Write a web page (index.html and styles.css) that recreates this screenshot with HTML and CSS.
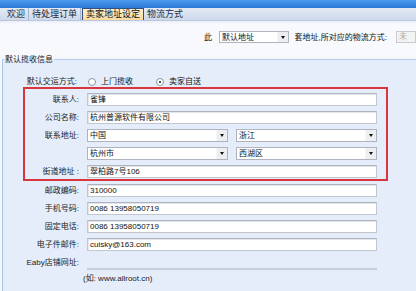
FILE: index.html
```html
<!DOCTYPE html>
<html lang="zh">
<head>
<meta charset="utf-8">
<title>卖家地址设定</title>
<link rel="stylesheet" href="styles.css">
</head>
<body>
<div class="topbar"></div>
<div class="tabs">
  <span class="tab">欢迎</span>
  <span class="tab">待处理订单</span>
  <span class="tab active">卖家地址设定</span>
  <span class="tab last">物流方式</span>
</div>
<div class="toolbar">
  <span>此</span>
  <div class="select sel-top"><span class="val">默认地址</span><span class="arrow"></span></div>
  <span class="tb-text">套地址,所对应的物流方式:</span>
  <div class="ghost">未</div>
</div>
<fieldset class="group">
  <legend>默认揽收信息</legend>
  <div class="row radio-row">
    <span class="label">默认交运方式:</span>
    <span class="radio"></span><span class="rtext">上门揽收</span>
    <span class="radio checked"></span><span class="rtext">卖家自送</span>
  </div>
  <div class="redbox">
    <div class="row"><span class="label">联系人:</span><div class="input">雀锋</div></div>
    <div class="row"><span class="label">公司名称:</span><div class="input">杭州普源软件有限公司</div></div>
    <div class="row"><span class="label">联系地址:</span>
      <div class="pair">
        <div class="select"><span class="val">中国</span><span class="arrow"></span></div>
        <div class="select"><span class="val">浙江</span><span class="arrow"></span></div>
      </div>
    </div>
    <div class="row"><span class="label"></span>
      <div class="pair">
        <div class="select"><span class="val">杭州市</span><span class="arrow"></span></div>
        <div class="select"><span class="val">西湖区</span><span class="arrow"></span></div>
      </div>
    </div>
    <div class="row"><span class="label">街道地址 :</span><div class="input">翠柏路7号106</div></div>
  </div>
  <div class="rest">
    <div class="row"><span class="label">邮政编码:</span><div class="input">310000</div></div>
    <div class="row"><span class="label">手机号码:</span><div class="input">0086 13958050719</div></div>
    <div class="row"><span class="label">固定电话:</span><div class="input">0086 13958050719</div></div>
    <div class="row"><span class="label">电子件邮件:</span><div class="input">cuisky@163.com</div></div>
    <div class="row"><span class="label">Eaby店铺网址:</span><div class="input line"></div></div>
    <div class="note">(如: www.allroot.cn)</div>
  </div>
</fieldset>
</body>
</html>
```
FILE: styles.css
```css
html, body {
  margin: 0;
  padding: 0;
}
body {
  width: 416px;
  height: 291px;
  overflow: hidden;
  background: #f6f8fc;
  font-family: "Liberation Sans", "Noto Sans CJK SC", sans-serif;
  font-size: 8px;
  line-height: 9px;
  color: #111;
}
.topbar {
  height: 8px;
  background: linear-gradient(#4d9cec, #2a78d6);
}
.tabs {
  height: 12px;
  display: flex;
  align-items: stretch;
  padding-left: 4px;
  background: linear-gradient(#e4eaf5, #cdd8ea);
  border-bottom: 1px solid #b9c6dc;
  box-sizing: content-box;
}
.tab {
  display: flex;
  align-items: center;
  padding: 0 3px;
  font-size: 9px;
  color: #1d2a40;
  border-right: 1px solid #aab8ce;
}
.tab.active {
  margin-left: 1px;
  padding: 0 3px;
  background: linear-gradient(#fff1d4, #fcd99c);
  border: 1px solid #34507e;
  border-bottom: none;
  color: #111;
}
.tab.last {
  border-right: none;
}
.toolbar {
  display: flex;
  align-items: center;
  height: 34px;
  padding-left: 204px;
  padding-bottom: 2px;
  box-sizing: border-box;
  white-space: nowrap;
  background: linear-gradient(#e9eef7 0, #f7f9fd 3px, #f7f9fd);
}
.toolbar .sel-top {
  width: 80px;
  height: 12px;
  margin-left: 7px;
}
.tb-text {
  margin-left: 6px;
}
.ghost {
  margin-left: 9px;
  height: 12px;
  width: 20px;
  flex: none;
  border: 1px solid #c8ccd2;
  background: #f3f3f3;
  color: #aaa;
  padding-left: 2px;
  box-sizing: border-box;
}
.group {
  margin: 0 0 0 2px;
  padding: 0;
  border: none;
  border-top: 1px solid #b4cbee;
  border-left: 1px solid #a9c3ea;
  background: #e6edfa;
  min-height: 240px;
}
.group legend {
  margin-left: 1px;
  padding: 0 1px;
  font-size: 8px;
  line-height: 9px;
  color: #222;
}
.row {
  display: flex;
  align-items: center;
  height: 13px;
  margin-bottom: 5px;
}
.label {
  flex: 0 0 84px;
  box-sizing: border-box;
  padding-right: 8px;
  text-align: right;
  white-space: nowrap;
  color: #222;
}
.radio-row {
  margin-top: 11px;
  margin-bottom: 0;
  height: 13px;
}
.radio-row .label {
  padding-right: 10px;
}
.radio {
  width: 8px;
  height: 8px;
  margin-left: 1px;
  border: 1px solid #8d939c;
  border-radius: 50%;
  background: #fff;
  box-sizing: border-box;
  position: relative;
  flex: none;
}
.radio.checked::after {
  content: "";
  position: absolute;
  left: 2px;
  top: 2px;
  width: 2px;
  height: 2px;
  border-radius: 50%;
  background: #111;
}
.rtext {
  margin-left: 5px;
  width: 54px;
}
.redbox {
  margin: -1px 0 0 20px;
  width: 365px;
  box-sizing: border-box;
  border: 2px solid #d8363c;
  padding: 4px 0 1px;
}
.redbox .label {
  flex-basis: 62px;
}
.redbox .row:last-child {
  margin-bottom: 0;
}
.rest {
  margin-top: 3px;
}
.input {
  width: 290px;
  height: 13px;
  box-sizing: border-box;
  background: #fff;
  border: 1px solid #c2c7cf;
  border-top-color: #aeb4bd;
  box-shadow: inset 1px 1px 0 #e2e5ea;
  padding-left: 2px;
  line-height: 11px;
  white-space: nowrap;
}
.input.line {
  background: transparent;
  border: none;
  border-bottom: 2px solid #c9ced6;
  box-shadow: none;
  align-self: flex-end;
  height: 3px;
  margin-bottom: -1px;
}
.pair {
  display: flex;
  width: 290px;
  gap: 8px;
}
.select {
  flex: 1;
  height: 13px;
  display: flex;
  box-sizing: border-box;
  background: #fff;
  border: 1px solid #aeb4bd;
}
.select .val {
  flex: 1;
  padding-left: 2px;
  line-height: 11px;
  white-space: nowrap;
}
.select .arrow {
  width: 10px;
  background: #eceef1;
  border-left: 1px solid #f6f7f8;
  display: flex;
  align-items: center;
  justify-content: center;
}
.select .arrow::before {
  content: "";
  border-left: 2.5px solid transparent;
  border-right: 2.5px solid transparent;
  border-top: 3px solid #111;
}
.note {
  margin: 0 0 0 80px;
  padding-top: 0;
  color: #222;
}
```
